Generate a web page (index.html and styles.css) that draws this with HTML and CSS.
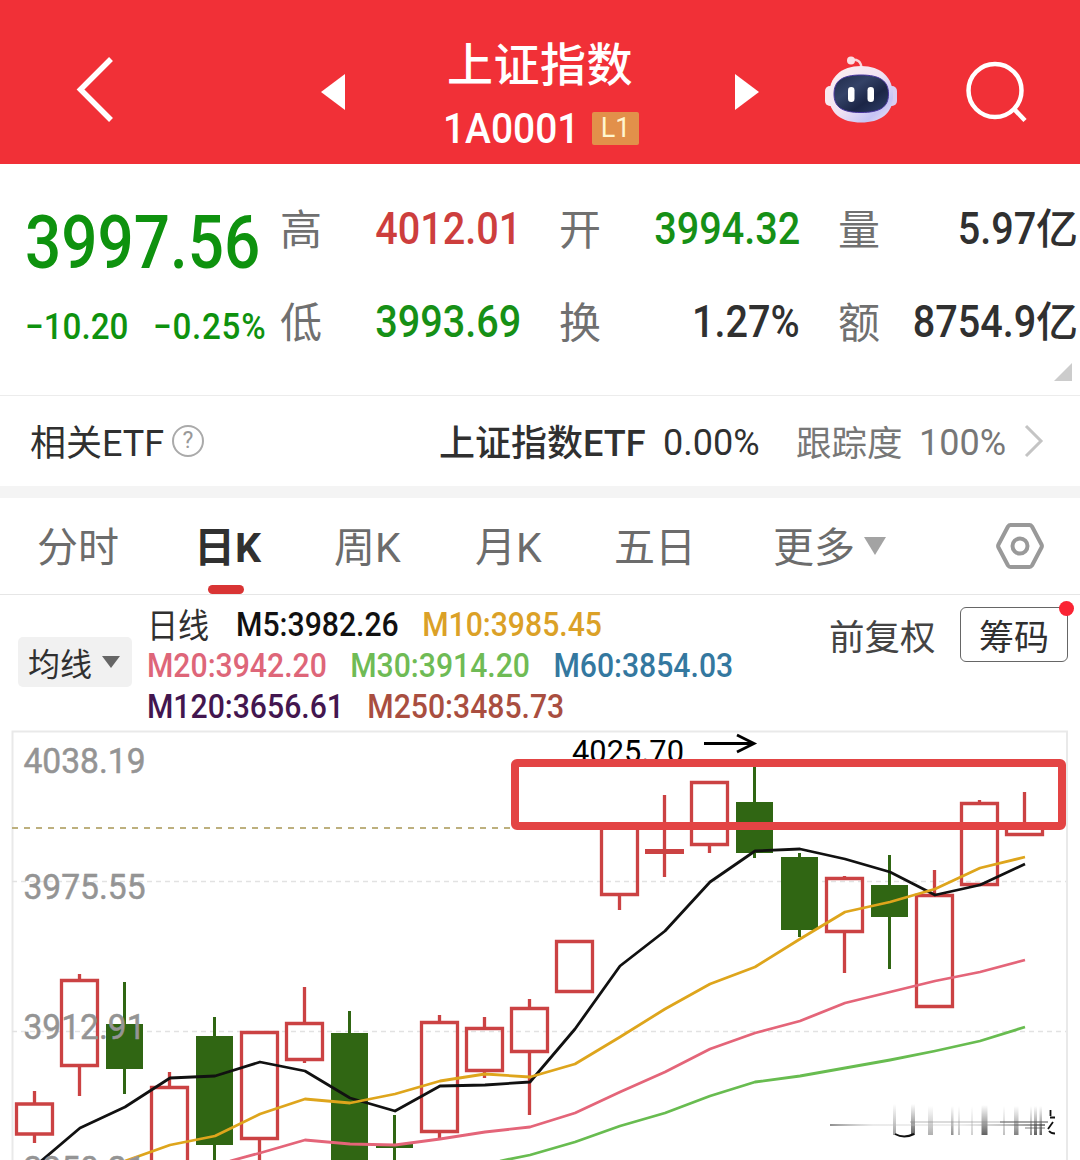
FILE: index.html
```html
<!DOCTYPE html>
<html lang="zh-CN">
<head>
<meta charset="utf-8">
<title>上证指数 1A0001</title>
<link rel="stylesheet" href="styles.css">
</head>
<body>
<header class="topbar">
  <svg class="back" width="40" height="70" viewBox="0 0 40 70"><path d="M36 4 L5.500 34.500 L36 65" fill="none" stroke="#fff" stroke-width="5.500"/></svg>
  <svg class="prev" width="24" height="36" viewBox="0 0 24 36"><path d="M24 0V36L0 18Z" fill="#fff"/></svg>
  <div class="heading">
    <h1>上证指数</h1>
    <div class="code"><span class="code-text">1A0001</span><span class="badge">L1</span></div>
  </div>
  <svg class="next" width="24" height="36" viewBox="0 0 24 36"><path d="M0 0V36L24 18Z" fill="#fff"/></svg>
  <svg class="robot" width="72" height="68" viewBox="825 56 72 68">
    <defs>
      <linearGradient id="shell" x1="0" y1="0" x2="1" y2="1"><stop offset="0" stop-color="#fff1ef"/><stop offset=".5" stop-color="#f0e2f3"/><stop offset=".78" stop-color="#c6c4f5"/><stop offset="1" stop-color="#f4e4f1"/></linearGradient>
      <linearGradient id="visor" x1="0" y1="0" x2="1" y2="1"><stop offset="0" stop-color="#202b4a"/><stop offset=".35" stop-color="#344267"/><stop offset=".65" stop-color="#1b2546"/><stop offset="1" stop-color="#30406a"/></linearGradient>
    </defs>
    <path d="M851 60C857 59 861 61 861.500 68" fill="none" stroke="#fbd3d8" stroke-width="2.500"/>
    <circle cx="851" cy="60.500" r="4" fill="#fbdfe4"/>
    <rect x="825" y="86" width="12" height="20" rx="5" fill="#f9e8ef"/>
    <rect x="885" y="86" width="12" height="20" rx="5" fill="#d9cdf2"/>
    <path d="M861 66C881 66 893 77 893 96C893 114 880 122.500 861 122.500C842 122.500 829 114 829 96C829 77 841 66 861 66Z" fill="url(#shell)"/>
    <path d="M861 75C880 75 888.500 81 888.500 94C888.500 107 880 112.500 861 112.500C842 112.500 834 107 834 94C834 81 842 75 861 75Z" fill="url(#visor)" stroke="#4a36a0" stroke-width="1"/>
    <rect x="848" y="87" width="6.500" height="15" rx="3.250" fill="#fff"/>
    <rect x="867.500" y="87" width="6.500" height="15" rx="3.250" fill="#fff"/>
  </svg>
  <svg class="search" width="64" height="64" viewBox="0 0 64 64"><g fill="none" stroke="#fff" stroke-width="4.500"><circle cx="30" cy="30.500" r="26.500"/><path d="M49 49L60 60.500"/></g></svg>
</header>

<section class="quote">
  <div class="price">
    <div class="last"><span>3997.56</span></div>
    <div class="change"><span>−10.20</span><span class="pct">−0.25%</span></div>
  </div>
  <dl class="stats">
    <dt>高</dt><dd class="up"><span>4012.01</span></dd>
    <dt>开</dt><dd class="down"><span>3994.32</span></dd>
    <dt>量</dt><dd class="wide"><span>5.97</span>亿</dd>
    <dt>低</dt><dd class="down"><span>3993.69</span></dd>
    <dt>换</dt><dd><span>1.27%</span></dd>
    <dt>额</dt><dd class="wide"><span>8754.9</span>亿</dd>
  </dl>
  <i class="corner"></i>
</section>

<section class="etf">
  <span class="etf-label">相关ETF</span>
  <span class="help">?</span>
  <strong>上证指数ETF</strong>
  <span class="etf-pct">0.00%</span>
  <span class="track">跟踪度</span>
  <span class="track-pct">100%</span>
  <svg width="20" height="34" viewBox="0 0 20 34"><path d="M2 2L17 17L2 32" fill="none" stroke="#c4c4c4" stroke-width="3"/></svg>
</section>

<nav class="tabs">
  <span class="t1">分时</span>
  <span class="t2 active">日K</span>
  <span class="t3">周K</span>
  <span class="t4">月K</span>
  <span class="t5">五日</span>
  <span class="t6">更多<svg width="24" height="20" viewBox="0 0 24 20"><path d="M1 1H23L12 19Z" fill="#a3a3a3"/></svg></span>
  <svg class="settings" width="50" height="48" viewBox="0 0 50 48"><g fill="none" stroke="#999" stroke-width="4" stroke-linejoin="round"><path d="M15.500 3H34.500Q36 3 37 4.500L46.500 22.500Q47.300 24 46.500 25.500L37 43.500Q36 45 34.500 45H15.500Q14 45 13 43.500L3.500 25.500Q2.700 24 3.500 22.500L13 4.500Q14 3 15.500 3Z"/><circle cx="25" cy="24" r="7.500"/></g></svg>
</nav>

<section class="tools">
  <div class="ma-select">均线<svg width="20" height="14" viewBox="0 0 20 14"><path d="M1 1H19L10 13Z" fill="#666"/></svg></div>
  <div class="legend">
    <div class="row"><span class="cap">日线</span><span class="m5">M5:3982.26</span><span class="m10">M10:3985.45</span></div>
    <div class="row"><span class="m20">M20:3942.20</span><span class="m30">M30:3914.20</span><span class="m60">M60:3854.03</span></div>
    <div class="row"><span class="m120">M120:3656.61</span><span class="m250">M250:3485.73</span></div>
  </div>
  <span class="adjust">前复权</span>
  <span class="chips">筹码<i></i></span>
</section>

<svg class="chart" width="1080" height="430" viewBox="0 730 1080 430">
  <defs>
    <linearGradient id="fade" x1="0" y1="0" x2="0" y2="1"><stop offset="0" stop-color="#555" stop-opacity="0"/><stop offset="1" stop-color="#444" stop-opacity=".85"/></linearGradient>
    <linearGradient id="streak" x1="0" y1="0" x2="1" y2="0"><stop offset="0" stop-color="#444"/><stop offset=".2" stop-color="#bbb" stop-opacity=".5"/><stop offset=".6" stop-color="#bbb" stop-opacity=".4"/><stop offset="1" stop-color="#333"/></linearGradient>
  </defs>
  <path d="M12.500 1160V731.500H1067V1160" fill="none" stroke="#e9e9e9" stroke-width="2"/>
  <path d="M12 881.500H1066M12 1031.500H1066" stroke="#e2e2e2" stroke-width="1.500" stroke-dasharray="5 4"/>
  <path d="M12 828H512" stroke="#bdb07e" stroke-width="2" stroke-dasharray="6 6"/>

  <g fill="none" stroke="#cb4243" stroke-width="3.300">
    <path d="M34.500 1091V1103M34.500 1135V1143M79.500 974V980M79.500 1067V1096M169.500 1072V1087M259.500 1140V1162M304.500 987V1023M304.500 1060V1063M439.500 1015V1022M439.500 1133V1138M484.500 1017V1028M484.500 1071V1078M529.500 999V1008M529.500 1053V1115M619.500 896V910M664.500 795V877M709.500 846V853M844.500 876V878M844.500 933V973M934.500 870V895M979.500 800V803M1024.500 792V827"/>
    <path d="M16.500 1104h36v30h-36zM61.500 980.500h36v85h-36zM151.500 1087.500h36v90h-36zM241.500 1032.500h36v106h-36zM286.500 1023.500h36v36h-36zM421.500 1022.500h36v109h-36zM466.500 1028.500h36v42h-36zM511.500 1008.500h36v43h-36zM556.500 941.500h36v50h-36zM601.500 828h36v66.500h-36zM691.500 782.500h36v62h-36zM826.500 878.500h36v53h-36zM916.500 895.500h36v111h-36zM961.500 803.500h36v81h-36zM1006.500 827h36v7.500h-36z"/>
    <path d="M645 851.500H684" stroke-width="5"/>
  </g>
  <g fill="#306613">
    <path d="M106 1024h37v45h-37zM196 1036h37v109h-37zM331 1033h37v130h-37zM376 1144h37v4h-37zM736 802h37v51h-37zM781 857h37v73h-37zM871 885h37v32h-37z"/>
    <path d="M123 982h3v112h-3zM213 1017h3v145h-3zM348 1011h3v30h-3zM393 1115h3v47h-3zM753 766h3v92h-3zM798 853h3v84h-3zM888 855h3v114h-3z"/>
  </g>

  <g fill="none" stroke-width="2.800" stroke-linejoin="round">
    <polyline stroke="#68bc50" points="500,1161 530,1155 575,1142 620,1126 665,1113 710,1096 755,1082 800,1076 845,1068 890,1060 935,1051 980,1041 1025,1027"/>
    <polyline stroke="#e46579" points="230,1161 260,1153 305,1140 350,1144 395,1145 440,1139 485,1132 530,1127 575,1113 620,1092 665,1072 710,1049 755,1033 800,1021 845,1003 890,992 935,981 980,972 1025,960"/>
    <polyline stroke="#111" points="40,1162 80,1128 125,1107 170,1078 215,1076 260,1062 305,1071 350,1098 395,1111 440,1086 485,1085 530,1082 575,1029 620,966 665,931 710,882 755,851 800,849 845,859 890,872 935,895 980,885 1025,864"/>
    <polyline stroke="#dea51c" points="125,1161 170,1145 215,1136 260,1114 305,1099 350,1103 395,1094 440,1081 485,1074 530,1077 575,1064 620,1037 665,1009 710,984 755,967 800,939 845,912 890,902 935,889 980,868 1025,857"/>
  </g>

  <g class="axis">
    <text x="23.500" y="773" textLength="122" lengthAdjust="spacingAndGlyphs">4038.19</text>
    <text x="23.500" y="898.500" textLength="122" lengthAdjust="spacingAndGlyphs">3975.55</text>
    <text x="23.500" y="1039" textLength="122" lengthAdjust="spacingAndGlyphs">3912.91</text>
    <text x="23.500" y="1181" textLength="122" lengthAdjust="spacingAndGlyphs">3850.21</text>
  </g>

  <text class="peak" x="572" y="761.500" textLength="112" lengthAdjust="spacingAndGlyphs">4025.70</text>
  <path d="M704 743.500H754M737 735L754 743.500L737 752" fill="none" stroke="#000" stroke-width="2.800"/>
  <rect x="515" y="763" width="547" height="63" rx="2" fill="none" stroke="#e34444" stroke-width="8"/>

  <g fill="url(#fade)">
    <rect x="893" y="1104" width="3" height="31" opacity=".6"/><rect x="911" y="1104" width="4" height="31"/>
    <rect x="928" y="1106" width="5" height="29" opacity=".5"/><rect x="951" y="1106" width="2.500" height="29" opacity=".7"/>
    <rect x="958" y="1106" width="2" height="29" opacity=".4"/><rect x="971" y="1106" width="2" height="29" opacity=".3"/>
    <rect x="981.500" y="1105" width="6" height="30"/><rect x="1003" y="1106" width="2" height="29" opacity=".4"/>
    <rect x="1014" y="1106" width="4.500" height="29" opacity=".8"/><rect x="1030" y="1106" width="2" height="29" opacity=".7"/>
    <rect x="1034" y="1106" width="3" height="29"/><rect x="1039.500" y="1106" width="2.500" height="29"/>
  </g>
  <rect x="830" y="1124" width="215" height="2" fill="url(#streak)" opacity=".6"/>
  <rect x="910" y="1121" width="138" height="2" fill="#888" opacity=".3"/>
  <path d="M1000 1122H1048M1025 1128H1045" stroke="#444" stroke-width="1.200" opacity=".7"/>
  <path d="M895 1134Q904 1139 914 1134" fill="none" stroke="#111" stroke-width="2"/>
  <path d="M1050.500 1110V1116M1050 1117.500H1055M1053 1122L1048 1129M1049 1131Q1051 1133.500 1055 1133.500" fill="none" stroke="#111" stroke-width="1.800"/>
</svg>
</body>
</html>
```

FILE: styles.css
```css
* { box-sizing: border-box; }
body {
  margin: 0;
  width: 1080px;
  height: 1160px;
  overflow: hidden;
  background: #fff;
  color: #303030;
  font-family: Roboto, "Noto Sans CJK SC", sans-serif;
}
svg { display: block; flex: none; }

.topbar {
  display: flex;
  align-items: flex-start;
  height: 164px;
  background: #f13037;
  color: #fff;
}
.back { margin: 55px 0 0 75px; }
.prev { margin: 74px 0 0 206px; }
.heading { width: 390px; padding-top: 36px; }
h1 {
  margin: 0;
  padding-left: 102px;
  font-size: 46px;
  line-height: 58px;
  font-weight: 500;
  letter-spacing: .5px;
}
.code { display: flex; align-items: center; height: 69px; padding-left: 98px; }
.code-text {
  width: 149px;
  padding-bottom: 2px;
  font-size: 43px;
  font-weight: 500;
  transform: scaleX(.905);
  transform-origin: 0 50%;
}
.badge {
  width: 47px;
  height: 33px;
  border-radius: 2px;
  background: #e2904a;
  color: #fff6cf;
  font-size: 27px;
  line-height: 33px;
  text-align: center;
}
.next { margin-top: 74px; }
.robot { margin: 56px 0 0 66px; }
.search { margin: 60px 0 0 68px; }

.quote {
  display: flex;
  position: relative;
  height: 232px;
  padding-top: 19px;
  border-bottom: 1px solid #ececec;
}
.price { width: 280px; padding-left: 25px; color: #0e920e; }
.last { height: 117px; line-height: 119px; font-size: 74px; font-weight: 500; }
.last span { display: inline-block; transform: scaleX(.862); transform-origin: 0 50%; }
.change {
  display: flex;
  gap: 27px;
  height: 54px;
  line-height: 54px;
  font-size: 36.500px;
  font-weight: 500;
  white-space: nowrap;
  transform: scaleX(.91);
  transform-origin: 0 50%;
}
.pct { letter-spacing: .8px; }
.stats {
  display: grid;
  grid-template-columns: 44px 235px 44px 235px 44px 196px;
  grid-template-rows: 93px 93px;
  margin: 0;
  line-height: 93px;
}
.stats dt { width: 44px; padding-top: 1px; font-size: 42px; font-weight: 400; color: #707070; }
.stats dd { margin: 0; padding-right: 38px; font-size: 44px; font-weight: 500; text-align: right; white-space: nowrap; }
.stats dd span { display: inline-block; transform: scaleX(.9); transform-origin: 100% 50%; }
.stats .wide { padding-right: 0; font-size: 42px; }
.stats .wide span { font-size: 44px; }
.stats .up { color: #cd3e3d; }
.stats .down { color: #169016; }
.corner {
  position: absolute;
  right: 8px;
  bottom: 14px;
  width: 18px;
  height: 18px;
  background: #ccc;
  clip-path: polygon(100% 0, 100% 100%, 0 100%);
}

.etf {
  display: flex;
  align-items: center;
  height: 90px;
  padding-left: 30px;
  font-size: 36px;
  white-space: nowrap;
}
.etf-label { width: 142px; padding-bottom: 3px; }
.help {
  width: 32px;
  height: 32px;
  margin-right: 235px;
  border: 2px solid #aaa;
  border-radius: 50%;
  color: #999;
  font-size: 23px;
  line-height: 28px;
  text-align: center;
}
.etf strong { width: 224px; padding-bottom: 3px; font-weight: 500; }
.etf-pct { width: 133px; padding-top: 4px; }
.track { width: 123px; padding-bottom: 1px; color: #777; font-size: 35.500px; }
.track-pct { width: 105px; padding-top: 4px; color: #777; }

.tabs {
  display: flex;
  align-items: center;
  height: 109px;
  border-top: 12px solid #f4f4f4;
  border-bottom: 1px solid #e6e6e6;
  padding-left: 37px;
  font-size: 41px;
  font-weight: 400;
  color: #6c6c6c;
  white-space: nowrap;
}
.tabs > span { padding-bottom: 4px; }
.t1 { width: 157px; }
.t2 { width: 140px; }
.t3 { width: 141px; }
.t4 { width: 139px; }
.t5 { width: 159px; }
.t6 { display: flex; align-items: center; gap: 8px; width: 222px; }
.t6 svg { margin-top: 4px; }
.active { position: relative; color: #303030; font-weight: 700; }
.active::after {
  content: "";
  position: absolute;
  left: 14px;
  bottom: -16px;
  width: 36px;
  height: 9px;
  border-radius: 5px;
  background: #d93434;
}

.tools { display: flex; height: 135px; padding-left: 18px; white-space: nowrap; }
.ma-select {
  display: flex;
  align-items: center;
  gap: 9px;
  width: 114px;
  height: 50px;
  margin: 42px 15px 0 0;
  padding-left: 10px;
  border-radius: 5px;
  background: #f1f1f1;
  font-size: 32px;
}
.legend { width: 682px; padding-top: 9px; }
.row {
  display: flex;
  gap: 26px;
  height: 41px;
  line-height: 41px;
  font-size: 33.500px;
  font-weight: 500;
  transform: scaleX(.9);
  transform-origin: 0 50%;
}
.cap { width: 73px; padding-top: 2px; font-weight: 400; font-size: 34.500px; }
.m5 { color: #111; }
.m10 { color: #dba127; }
.m20 { color: #de6679; }
.m30 { color: #6fbb55; }
.m60 { color: #34789f; }
.m120 { color: #43164f; }
.m250 { color: #a94e40; }
.adjust { width: 131px; padding-top: 17px; font-size: 35.500px; line-height: 52px; color: #444; }
.chips {
  position: relative;
  width: 108px;
  height: 55px;
  margin-top: 12px;
  border: 1px solid #666;
  border-radius: 6px;
  font-size: 35px;
  line-height: 61px;
  text-align: center;
}
.chips i {
  position: absolute;
  top: -7px;
  right: -7px;
  width: 15px;
  height: 15px;
  border-radius: 50%;
  background: #fa2434;
}

.chart { font-family: Roboto, sans-serif; }
.axis { font-size: 35px; font-weight: 400; fill: #949494; stroke: #949494; stroke-width: .5px; }
.peak { font-size: 32px; fill: #000; }
```
